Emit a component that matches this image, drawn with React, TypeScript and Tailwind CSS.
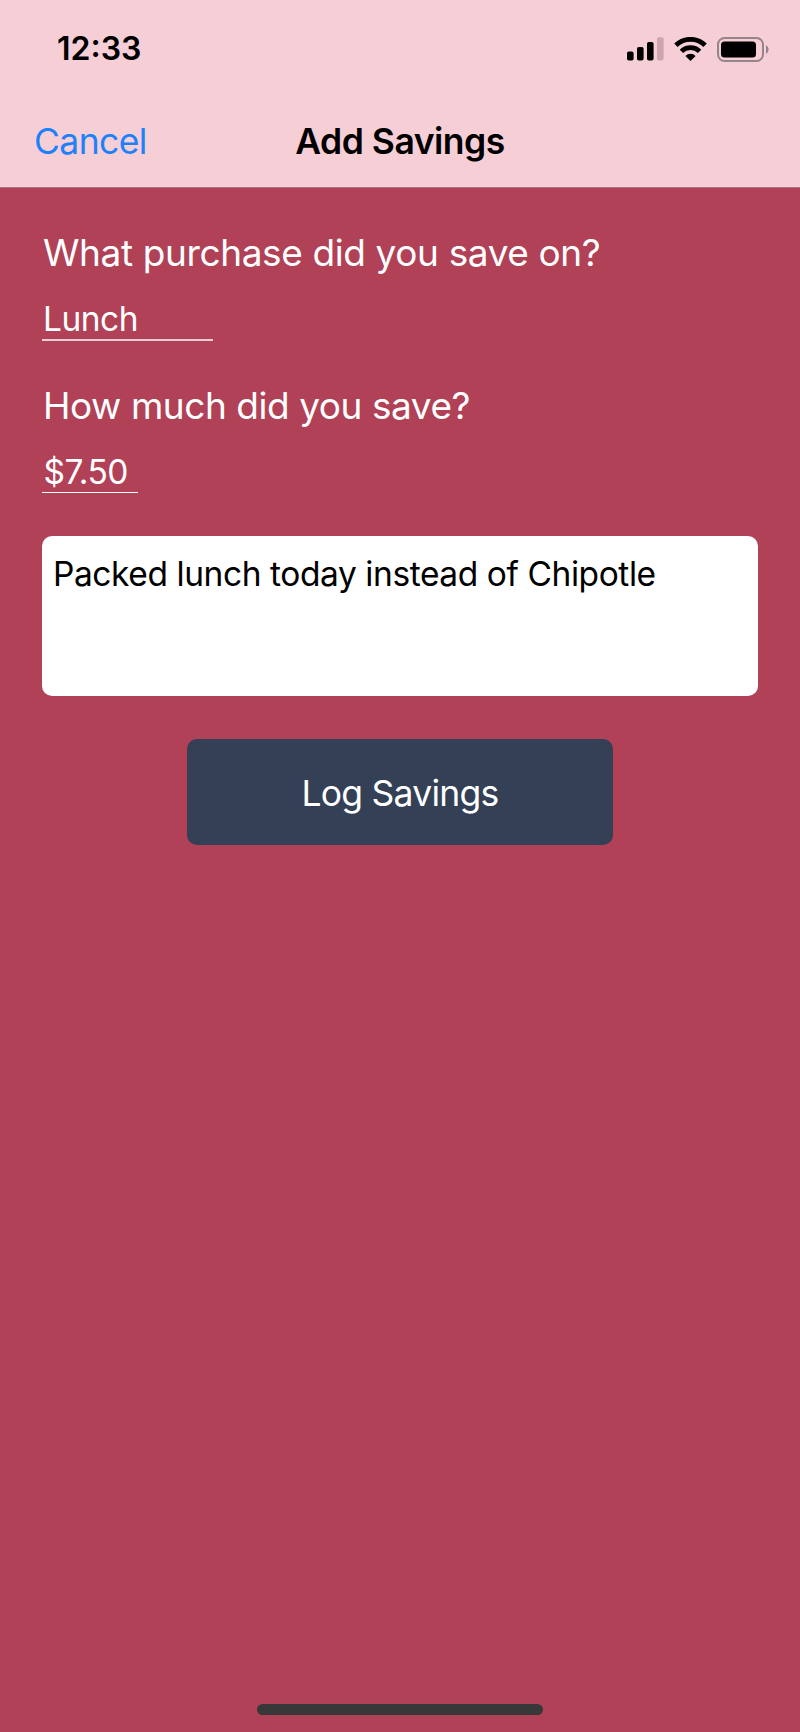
import { useState } from "react";

function SignalIcon() {
  return (
    <svg width="37" height="24" viewBox="0 0 37 24">
      <rect x="0" y="14.5" width="6.6" height="9" rx="1.8" fill="#000" />
      <rect x="10" y="10" width="6.6" height="13.5" rx="1.8" fill="#000" />
      <rect x="20" y="5" width="6.6" height="18.5" rx="1.8" fill="#000" />
      <rect x="30" y="0.3" width="6.6" height="23.2" rx="1.8" fill="#cfa5ad" />
    </svg>
  );
}

function WifiIcon() {
  return (
    <svg width="33" height="24" viewBox="0 0 33 24" fill="none" stroke="#000" strokeWidth="4.8">
      <path d="M1.9 8.2 A21 21 0 0 1 31.1 8.2" />
      <path d="M7.4 14.4 A13 13 0 0 1 25.6 14.4" />
      <path d="M16.5 24 L11.4 19 A7 7 0 0 1 21.6 19 Z" fill="#000" stroke="none" />
    </svg>
  );
}

function BatteryIcon() {
  return (
    <svg width="52" height="25" viewBox="0 0 52 25">
      <rect x="1" y="1" width="45" height="23" rx="6.5" fill="none" stroke="#94858b" strokeWidth="2" />
      <rect x="4" y="4.5" width="35" height="16" rx="3.5" fill="#000" />
      <path d="M49 8.3 C52.4 9.6 52.4 15.4 49 16.7 Z" fill="#94858b" />
    </svg>
  );
}

function StatusBar() {
  return (
    <div className="flex h-[98px] items-center justify-between pl-[57px] pr-[31px]">
      <span className="text-[32px] font-semibold leading-none">12:33</span>
      <div className="flex items-center gap-[10px]">
        <SignalIcon />
        <WifiIcon />
        <BatteryIcon />
      </div>
    </div>
  );
}

export default function App() {
  const [purchase, setPurchase] = useState("Lunch");
  const [amount, setAmount] = useState("$7.50");
  const [notes, setNotes] = useState("Packed lunch today instead of Chipotle");

  return (
    <div className="flex h-[1732px] w-[800px] flex-col bg-[#b04156] font-['Inter',sans-serif]">
      <header className="h-[188px] border-b border-[#a5767f] bg-[#f6ced6] text-black">
        <StatusBar />
        <nav className="grid h-[87px] grid-cols-[1fr_auto_1fr] items-center px-[34px] text-[35.5px] leading-none">
          <button className="justify-self-start tracking-[-0.6px] text-[#1d81fc]">Cancel</button>
          <h1 className="font-semibold tracking-[-0.5px]">Add Savings</h1>
        </nav>
      </header>

      <main className="flex flex-1 flex-col items-start px-[42px] pt-[42px]">
        <label htmlFor="purchase" className="pl-[1px] text-[37px] leading-[46px] tracking-[-0.38px] text-white">
          What purchase did you save on?
        </label>
        <input
          id="purchase"
          value={purchase}
          onChange={(e) => setPurchase(e.target.value)}
          className="mt-[21px] h-[44px] w-[171px] border-b-2 border-[#eccdd3] pl-[1px] pt-[2px] text-[33.5px] tracking-[-0.5px] text-white outline-none"
        />

        <label htmlFor="amount" className="mt-[42px] pl-[1px] text-[37px] leading-[46px] tracking-[-0.45px] text-white">
          How much did you save?
        </label>
        <input
          id="amount"
          value={amount}
          onChange={(e) => setAmount(e.target.value)}
          className="mt-[21px] h-[43px] w-[96px] border-b border-white pl-[1.5px] pt-[2px] text-[33.5px] tracking-[-0.5px] text-white outline-none"
        />

        <textarea
          value={notes}
          onChange={(e) => setNotes(e.target.value)}
          className="mt-[43px] h-[160px] w-full resize-none rounded-[10px] bg-white px-[11px] pt-[18px] text-[33.5px] leading-[41px] tracking-[-0.42px] text-black outline-none"
        />

        <button className="mt-[43px] h-[106px] w-[426px] self-center rounded-[10px] bg-[#334056] pt-[3px] text-[35.5px] tracking-[-0.75px] text-white">
          Log Savings
        </button>
      </main>

      <footer className="flex justify-center pb-[17px]">
        <div className="h-[11px] w-[286px] rounded-full bg-[#383838]" />
      </footer>
    </div>
  );
}
